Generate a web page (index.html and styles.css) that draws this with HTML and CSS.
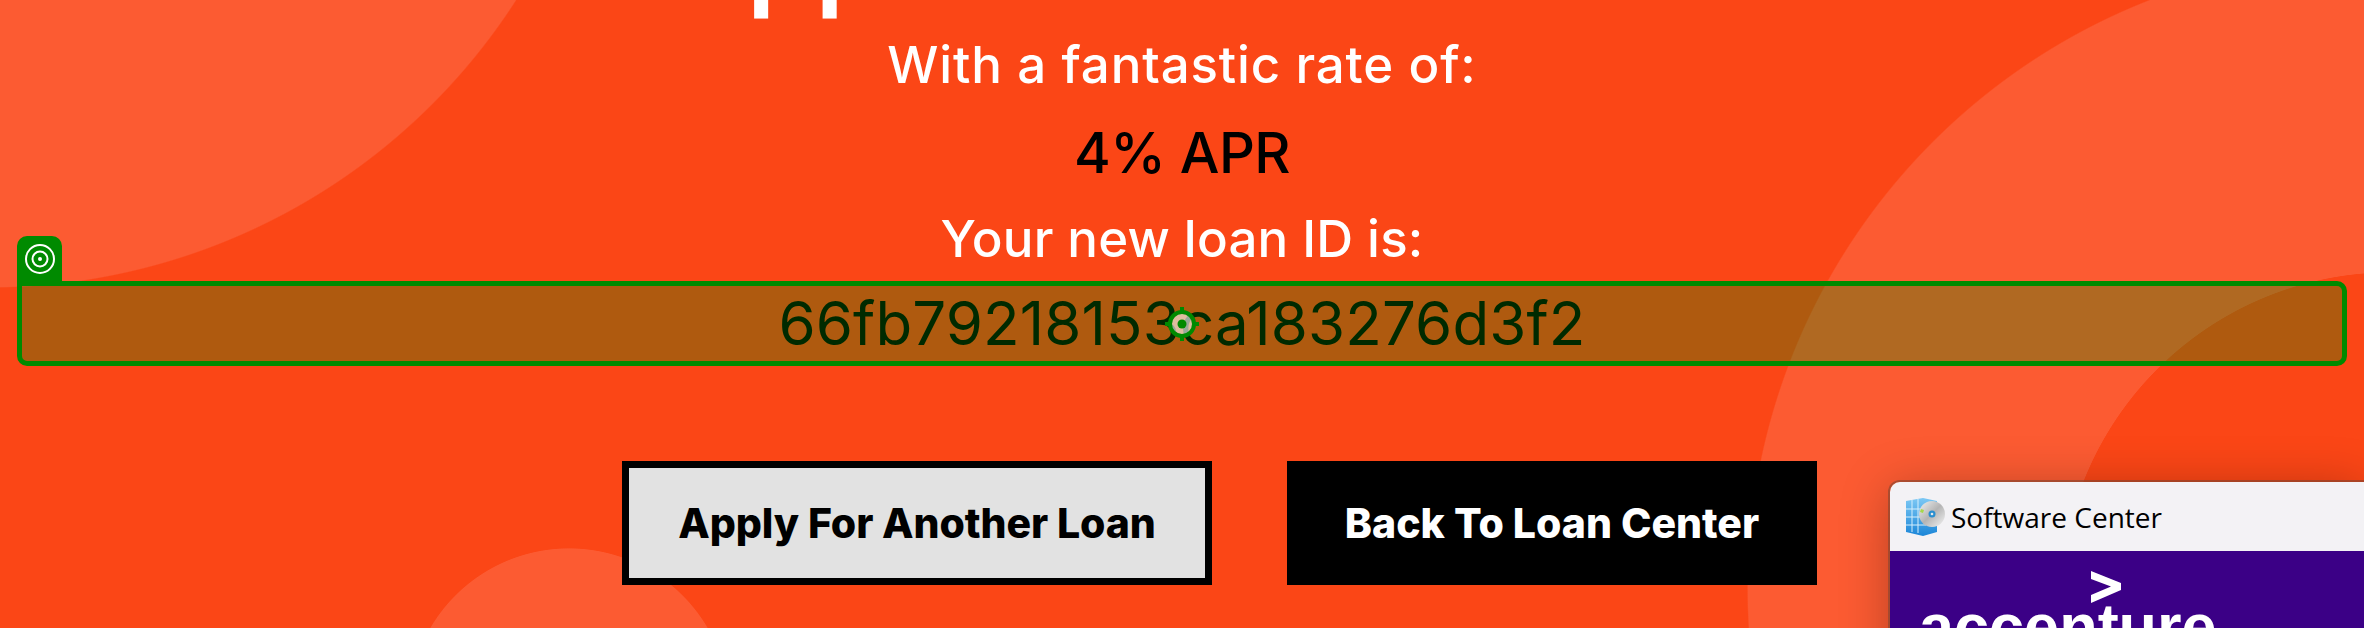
FILE: index.html
```html
<!DOCTYPE html>
<html lang="en">
<head>
  <meta charset="UTF-8">
  <meta name="viewport" content="width=device-width, initial-scale=1.0">
  <title>Loan Result</title>
  <link rel="stylesheet" href="styles.css">
</head>
<body>
  <main class="result">
    <h1 class="result-title">Application Funded</h1>
    <p class="line line-rate-label">With a fantastic rate of:</p>
    <p class="line line-rate">4% APR</p>
    <p class="line line-id-label">Your new loan ID is:</p>
    <div class="loan-id">
      <span class="loan-id-text">66fb79218153ca183276d3f2</span>
      <div class="inspect-box">
        <div class="inspect-tag">
          <svg width="32" height="32" viewBox="0 0 32 32" fill="none" stroke="#fff" stroke-width="2">
            <circle cx="16" cy="16" r="14"/>
            <circle cx="16" cy="16" r="7.5"/>
            <circle cx="16" cy="16" r="2" fill="#fff" stroke="none"/>
          </svg>
        </div>
        <svg class="inspect-target" width="36" height="36" viewBox="0 0 36 36">
          <circle cx="18" cy="18" r="12" fill="#fff" fill-opacity="0.6" stroke="#008a00" stroke-width="4"/>
          <path d="M18 1v6M18 29v6M1 18h6M29 18h6" stroke="#008a00" stroke-width="4"/>
          <circle cx="18" cy="18" r="4.5" fill="#008a00"/>
        </svg>
      </div>
    </div>
    <div class="actions">
      <a class="btn btn-light">Apply For Another Loan</a>
      <a class="btn btn-dark">Back To Loan Center</a>
    </div>
  </main>

  <!-- notification window in the corner -->
  <aside class="toast">
    <div class="toast-bar">
      <svg class="toast-icon" width="40" height="40" viewBox="0 0 40 40">
        <defs>
          <linearGradient id="tower" x1="0" y1="0" x2="0" y2="1">
            <stop offset="0" stop-color="#7cc8f4"/>
            <stop offset="1" stop-color="#1b86d8"/>
          </linearGradient>
          <linearGradient id="disc" x1="0" y1="0" x2="1" y2="1">
            <stop offset="0" stop-color="#f2f2f2"/>
            <stop offset="0.5" stop-color="#b4b4b4"/>
            <stop offset="1" stop-color="#f5f5f5"/>
          </linearGradient>
        </defs>
        <path d="M1 4l17-3 14 3v31l-14 4-17-4z" fill="url(#tower)"/>
        <path d="M7 3v32M13 2v34M1 12h26M1 20h20M1 28h20" stroke="#d4eefc" stroke-width="1" fill="none"/>
        <circle cx="27" cy="17" r="13" fill="url(#disc)"/>
        <circle cx="27" cy="17" r="3.5" fill="#2a8fd0"/>
        <circle cx="27" cy="17" r="1.3" fill="#e8e8e8"/>
        <path d="M16 12l3 1-1 3-3-1z" fill="#a6d84a"/>
      </svg>
      <span class="toast-title">Software Center</span>
    </div>
    <div class="toast-body">
      <svg class="accent-mark" width="32" height="32" viewBox="0 0 32 32">
        <path d="M1 0l30 12v7L1 32v-8l20-8.500L1 8z" fill="#fff"/>
      </svg>
      <span class="accent-name">accenture</span>
    </div>
  </aside>
</body>
</html>
```

FILE: styles.css
```css
html, body {
  height: 100%;
}
body {
  margin: 0;
  overflow: hidden;
  position: relative;
  font-family: Inter, "Noto Sans", sans-serif;
  background-color: #fb4616;
  background-image:
    radial-gradient(circle 331px at 2391px 603px, #fb4616 99.8%, transparent 100%),
    radial-gradient(circle 633px at 2380px 589px, #fc5b32 99.8%, transparent 100%),
    radial-gradient(circle 626px at -10px -338px, #fc5b32 99.8%, transparent 100%),
    radial-gradient(circle 161px at 569px 709px, #fc5b32 99.5%, transparent 100%);
}
.result {
  display: flex;
  flex-direction: column;
  align-items: center;
}
.result-title {
  margin: -59px 0 59px;
  height: 30px;
  font-size: 110px;
  line-height: 30px;
  font-weight: 600;
  color: #fff;
  white-space: nowrap;
}
.line {
  margin: 0;
  font-weight: 500;
  line-height: 70px;
  white-space: nowrap;
}
.line-rate-label {
  font-size: 51px;
  letter-spacing: 0.85px;
  color: #fff;
}
.line-rate {
  margin-top: 18px;
  font-size: 56px;
  letter-spacing: -0.5px;
  color: #000;
}
.line-id-label {
  margin-top: 16px;
  font-size: 51px;
  letter-spacing: 0.2px;
  color: #fff;
}
.loan-id {
  position: relative;
  box-sizing: border-box;
  width: 2330px;
  height: 85px;
  margin-top: 7px;
  text-align: center;
}
.loan-id-text {
  font-size: 60px;
  letter-spacing: 0.12px;
  line-height: 85px;
  color: #000;
}
.inspect-box {
  position: absolute;
  inset: 0;
  border: 5px solid #008a00;
  border-radius: 0 10px 10px 10px;
  background: rgba(0, 138, 0, 0.3);
}
.inspect-tag {
  position: absolute;
  left: -5px;
  bottom: 100%;
  margin-bottom: 5px;
  display: flex;
  align-items: center;
  justify-content: center;
  width: 45px;
  height: 45px;
  border-radius: 10px 10px 0 0;
  background: #008a00;
}
.inspect-target {
  position: absolute;
  left: 50%;
  top: 50%;
  transform: translate(-50%, -50%);
}
.actions {
  display: flex;
  gap: 75px;
  margin-top: 95px;
  padding-left: 75px;
}
.btn {
  display: flex;
  align-items: center;
  justify-content: center;
  box-sizing: border-box;
  height: 124px;
  font-size: 41px;
  font-weight: 800;
  white-space: nowrap;
}
.btn-light {
  width: 590px;
  border: 7px solid #000;
  background: #e2e2e2;
  color: #000;
  letter-spacing: -0.1px;
}
.btn-dark {
  width: 530px;
  background: #000;
  color: #fff;
}
.toast {
  position: absolute;
  left: 1890px;
  top: 482px;
  right: 0;
  height: 220px;
  border-radius: 10px 0 0 0;
  overflow: hidden;
  box-shadow: 0 0 0 2px rgba(120, 70, 50, 0.55), 0 6px 50px rgba(0, 0, 0, 0.28);
}
.toast-bar {
  display: flex;
  align-items: center;
  gap: 6px;
  height: 69px;
  padding-left: 15px;
  background: #f3f2f5;
}
.toast-title {
  font-family: "Open Sans", sans-serif;
  font-size: 28px;
  color: #000;
}
.toast-body {
  display: flex;
  flex-direction: column;
  align-items: flex-start;
  height: 151px;
  padding-left: 29px;
  background: #3b0086;
}
.accent-mark {
  margin: 20px 0 0 171px;
}
.accent-name {
  margin-top: -7px;
  font-family: "Liberation Sans", sans-serif;
  font-size: 63px;
  font-weight: 700;
  line-height: 60px;
  color: #fff;
}
```
